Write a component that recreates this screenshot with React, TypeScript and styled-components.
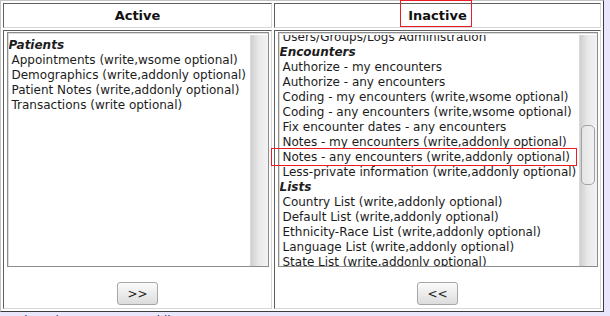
import { useLayoutEffect, useRef } from 'react';
import { styled, createGlobalStyle } from 'styled-components';

type Group = { label: string; items: string[] };

const activeGroups: Group[] = [
  {
    label: 'Patients',
    items: [
      'Appointments (write,wsome optional)',
      'Demographics (write,addonly optional)',
      'Patient Notes (write,addonly optional)',
      'Transactions (write optional)',
    ],
  },
];

const inactiveGroups: Group[] = [
  {
    label: 'Administration',
    items: [
      'Accounting',
      'ACL Administration',
      'Calendar Settings',
      'Database Reporting',
      'Forms Administration',
      'Practice Settings',
      'Superbill Codes Administration',
      'Users/Groups/Logs Administration',
    ],
  },
  {
    label: 'Encounters',
    items: [
      'Authorize - my encounters',
      'Authorize - any encounters',
      'Coding - my encounters (write,wsome optional)',
      'Coding - any encounters (write,wsome optional)',
      'Fix encounter dates - any encounters',
      'Notes - my encounters (write,addonly optional)',
      'Notes - any encounters (write,addonly optional)',
      'Less-private information (write,addonly optional)',
    ],
  },
  {
    label: 'Lists',
    items: [
      'Country List (write,addonly optional)',
      'Default List (write,addonly optional)',
      'Ethnicity-Race List (write,addonly optional)',
      'Language List (write,addonly optional)',
      'State List (write,addonly optional)',
    ],
  },
  {
    label: 'Patients',
    items: [
      'Disclosures (write,addonly optional)',
      'Documents (write,addonly optional)',
      'Lab Results (write,addonly optional)',
      'Medical/History (write,addonly optional)',
      'Prescriptions (write,addonly optional)',
      'Sensitive Demographics (write,addonly optional)',
    ],
  },
];

const GlobalStyle = createGlobalStyle`
  body {
    margin: 0;
    background: #e9e6fc;
    font-family: "DejaVu Sans", "Liberation Sans", sans-serif;
    color: #1c1c1c;
  }
`;

const Table = styled.table`
  border-collapse: separate;
  border-spacing: 2px;
  border: 1px solid;
  border-color: #c4c4c4 #3c3c3c #3c3c3c #c4c4c4;
  background: #fff;
  table-layout: fixed;
  width: 604px;
`;

const HeadCell = styled.th<{ $w: number }>`
  position: relative;
  width: ${(p) => p.$w}px;
  height: 23px;
  padding: 0;
  border: 1px solid;
  border-color: #5e5e5e #d6d6d6 #d6d6d6 #5e5e5e;
  font-size: 13px;
  font-weight: bold;
  text-align: center;
  color: #111;
`;

const BodyCell = styled.td`
  position: relative;
  height: 276px;
  padding: 1px 3px 0 3px;
  border: 1px solid;
  border-color: #5e5e5e #d6d6d6 #d6d6d6 #5e5e5e;
  vertical-align: top;
`;

const CellBody = styled.div`
  display: flex;
  flex-direction: column;
  align-items: center;
  gap: 15px;
`;

const ListBox = styled.div<{ $w: number }>`
  display: flex;
  width: ${(p) => p.$w}px;
  height: 233px;
  box-sizing: content-box;
  border: 1px solid #8c8c8c;
  box-shadow: inset 1px 1px 0 #dcdcdc;
  padding: 2px 0 0 1px;
  height: 231px;
  background: #fff;
`;

const Options = styled.div<{ $top: number }>`
  flex: 1;
  overflow: hidden;
  padding-top: ${(p) => p.$top}px;
  font-size: 12px;
  line-height: 14px;
`;

const GroupLabel = styled.div`
  padding: 0 0 1px 0;
  font-weight: bold;
  font-style: italic;
  white-space: nowrap;
`;

const Option = styled.div`
  padding: 0 0 1px 3px;
  white-space: nowrap;
`;

const Track = styled.div`
  width: 14px;
  border-left: 1px solid #d9d9d9;
  background: linear-gradient(to right, #cfcfcf, #e9e9e9 45%, #f3f3f3);
  padding: 0 2px 0 1px;
`;

const Thumb = styled.div<{ $top: number; $h: number }>`
  margin-top: ${(p) => p.$top}px;
  height: ${(p) => p.$h}px;
  border: 1px solid #a3a3a3;
  border-radius: 5px;
  background: linear-gradient(to right, #e4e4e4, #f2f2f2);
`;

const MoveButton = styled.button`
  width: 41px;
  height: 23px;
  padding: 0;
  border: 1px solid #a6a6a6;
  border-radius: 3px;
  background: linear-gradient(#fbfbfb, #dcdcdc);
  font-family: "DejaVu Sans", sans-serif;
  font-size: 12px;
  color: #222;
`;

const Annotation = styled.div`
  position: absolute;
  border: 1px solid #ec1c24;
  pointer-events: none;
`;

const Footer = styled.div`
  margin-top: 2px;
  padding-left: 2px;
  font-size: 12px;
  color: #1f1f6b;
`;

function List({ groups, top, scroll }: { groups: Group[]; top: number; scroll?: number }) {
  const ref = useRef<HTMLDivElement>(null);
  useLayoutEffect(() => {
    if (ref.current && scroll) ref.current.scrollTop = scroll;
  }, [scroll]);
  return (
    <Options ref={ref} $top={top}>
      {groups.map((g) => (
        <div key={g.label}>
          <GroupLabel>{g.label}</GroupLabel>
          {g.items.map((it) => (
            <Option key={it}>{it}</Option>
          ))}
        </div>
      ))}
    </Options>
  );
}

export default function App() {
  return (
    <>
      <GlobalStyle />
      <Table>
        <thead>
          <tr>
            <HeadCell $w={267}>Active</HeadCell>
            <HeadCell $w={325}>
              Inactive
              <Annotation style={{ left: 125, top: -4, width: 70, height: 25 }} />
            </HeadCell>
          </tr>
        </thead>
        <tbody>
          <tr>
            <BodyCell>
              <CellBody>
                <ListBox $w={259}>
                  <List groups={activeGroups} top={3} />
                  <Track />
                </ListBox>
                <MoveButton>&gt;&gt;</MoveButton>
              </CellBody>
            </BodyCell>
            <BodyCell>
              <CellBody>
                <ListBox $w={317}>
                  <List groups={inactiveGroups} top={4} scroll={129} />
                  <Track>
                    <Thumb $top={90} $h={58} />
                  </Track>
                </ListBox>
                <MoveButton>&lt;&lt;</MoveButton>
              </CellBody>
              <Annotation style={{ left: -4, top: 117, width: 304, height: 16 }} />
            </BodyCell>
          </tr>
        </tbody>
      </Table>
      <Footer>Back to the access control list</Footer>
    </>
  );
}
